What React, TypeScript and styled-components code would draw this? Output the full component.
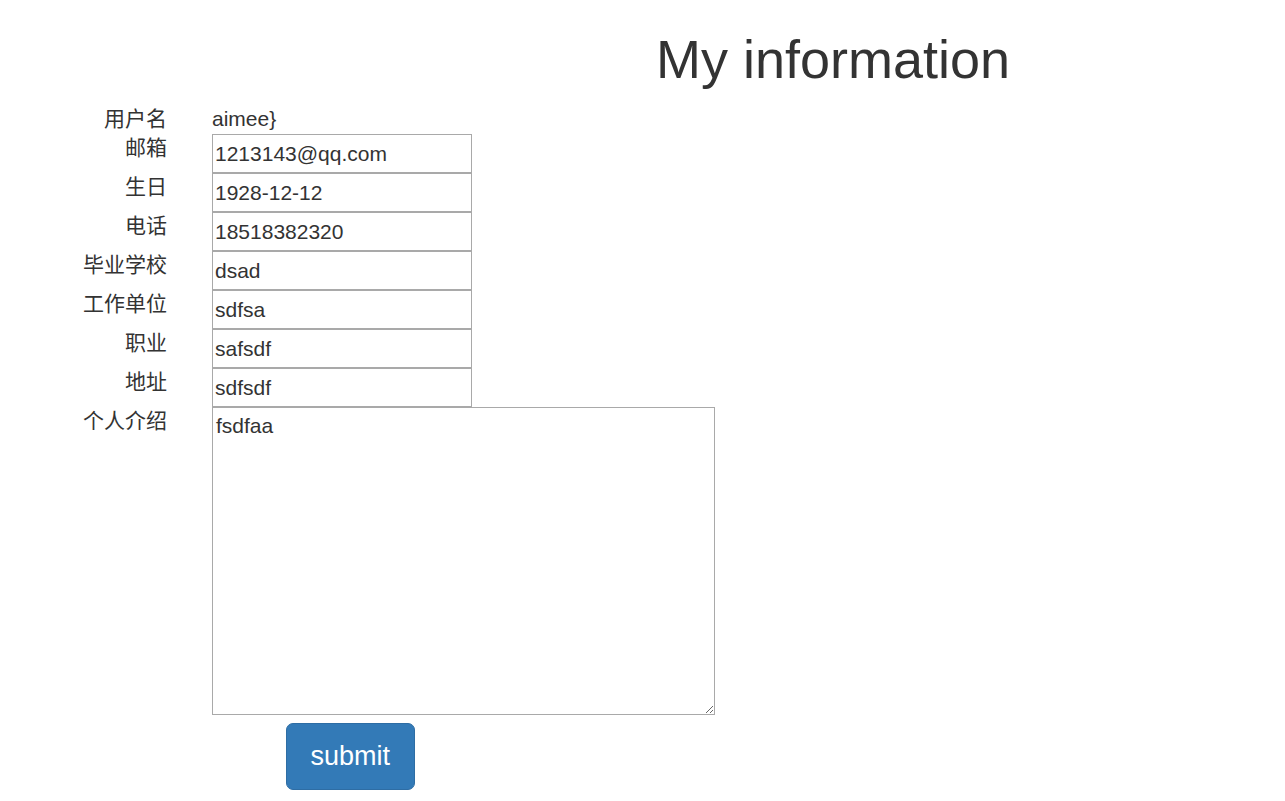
import React from "react";
import styled, { createGlobalStyle } from "styled-components";

const Global = createGlobalStyle`
  html, body { margin: 0; padding: 0; background: #fff; }
  body {
    font-family: "Liberation Sans", Arial, "Noto Sans CJK SC", sans-serif;
    font-size: 21px;
    line-height: 1.42857;
    color: #333;
  }
  * { box-sizing: border-box; }
`;

const Page = styled.div`
  display: flex;
  flex-direction: column;
`;

const Title = styled.h1`
  margin: 30px 0 15px 656px;
  font-size: 54px;
  font-weight: 500;
  line-height: 1.1;
  color: #333;
`;

const Form = styled.form`
  display: grid;
  grid-template-columns: 167px 503px;
  column-gap: 45px;
  align-items: start;
`;

const Label = styled.div<{ $lh?: number }>`
  text-align: right;
  line-height: ${(p) => p.$lh ?? 28}px;
  white-space: nowrap;
`;

const Value = styled.div`
  line-height: 30px;
  height: 30px;
`;

const Input = styled.input`
  display: block;
  width: 260px;
  height: 39px;
  margin: 0;
  padding: 0 2px;
  border: 1px solid #a9a9a9;
  font: inherit;
  color: #333;
  background: #fff;
`;

const Area = styled.textarea`
  display: block;
  width: 503px;
  height: 308px;
  margin: 0;
  padding: 3px 3px;
  border: 1px solid #a9a9a9;
  font: inherit;
  line-height: 30px;
  color: #333;
  background: #fff;
`;

const Submit = styled.button`
  margin: 8px 0 0 74px;
  padding: 15px 23.5px;
  font-family: inherit;
  font-size: 27px;
  line-height: 35px;
  color: #fff;
  background: #337ab7;
  border: 1px solid #2e6da4;
  border-radius: 7px;
  cursor: pointer;
`;

const Spacer = styled.div``;

const fields: [string, string][] = [
  ["邮箱", "1213143@qq.com"],
  ["生日", "1928-12-12"],
  ["电话", "18518382320"],
  ["毕业学校", "dsad"],
  ["工作单位", "sdfsa"],
  ["职业", "safsdf"],
  ["地址", "sdfsdf"],
];

export default function App() {
  return (
    <Page>
      <Global />
      <Title>My information</Title>
      <Form onSubmit={(e) => e.preventDefault()}>
        <Label $lh={30}>用户名</Label>
        <Value>aimee{"}"}</Value>
        {fields.map(([l, v]) => (
          <React.Fragment key={l}>
            <Label>{l}</Label>
            <Input defaultValue={v} />
          </React.Fragment>
        ))}
        <Label>个人介绍</Label>
        <Area defaultValue="fsdfaa" />
        <Spacer />
        <div>
          <Submit type="submit">submit</Submit>
        </div>
      </Form>
    </Page>
  );
}
